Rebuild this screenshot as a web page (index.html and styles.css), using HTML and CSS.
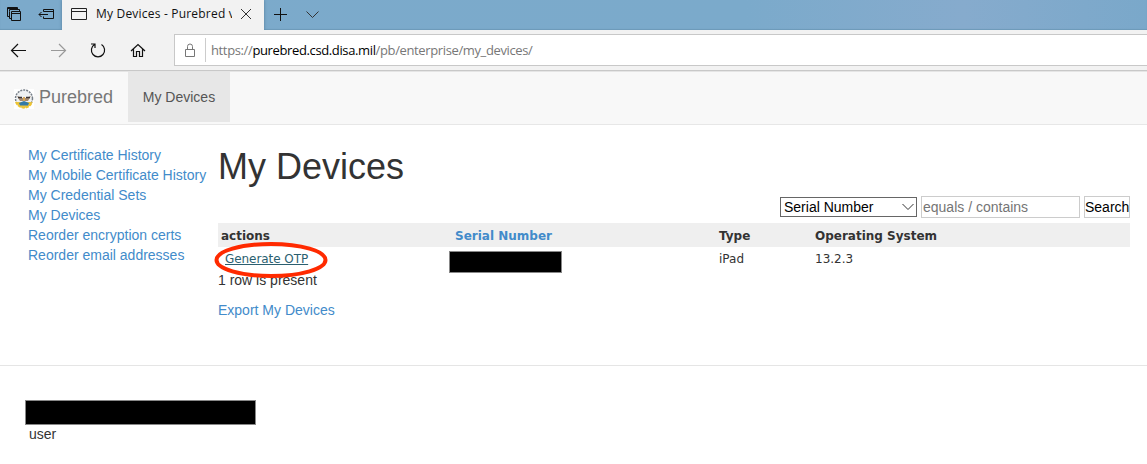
FILE: index.html
```
<!DOCTYPE html>
<html lang="en">
<head>
<meta charset="utf-8">
<title>My Devices - Purebred</title>
<link rel="stylesheet" href="styles.css">
</head>
<body>
<div class="tabstrip">
  <svg class="strip-tools" width="62" height="30" fill="none" stroke="#111">
    <path d="M9.500 16.500h-2v-9h10v2M7.500 8.500h10M11.500 18.500h-2v-7M11.500 11.500h9v9h-9zM11.500 13.500h9M9.500 11.500v-2h10v2"/>
    <path d="M43.500 11.500v-2h10v9h-10v-2M43.500 11.500h10M39 14.500h9M41.500 12l-2.500 2.500 2.500 2.500"/>
  </svg>
  <div class="tab">
    <svg width="16" height="14" fill="none" stroke="#222"><path d="M.5 1.500h15v11H.5zM.5 4.500h15"/></svg>
    <span class="tab-title">My Devices - Purebred v</span>
    <svg class="tab-close" width="12" height="12" stroke="#333"><path d="M1 1l10 10M11 1L1 11"/></svg>
  </div>
  <svg width="70" height="30" fill="none" stroke="#111"><path d="M10 14.500h13M16.500 8v13"/><path d="M42.500 11.500l6 6 6-6" stroke="#333"/></svg>
</div>
<div class="toolbar">
  <svg class="nav-icons" width="174" height="40" fill="none" stroke="#111" stroke-width="1.200">
    <path d="M12 20.500h14M18 14l-6.500 6.500L18 27"/>
    <path d="M51 20.500h14M59 14l6.500 6.500L59 27" stroke="#999"/>
    <path d="M94.500 14.600a6.600 6.600 0 1 0 7 0M91 14h4v4"/>
    <path d="M131 21l7-6.500 7 6.500M133.500 19v7.500h3v-5h3v5h3V19"/>
  </svg>
  <div class="address">
    <svg width="30" height="30" fill="none" stroke="#777"><path d="M10.500 14.500h9v7h-9zM12.500 14.500v-3a2.500 2.500 0 0 1 5 0v3"/></svg>
    <span class="address-text">https://<b>purebred.csd.disa.mil</b>/pb/enterprise/my_devices/</span>
  </div>
</div>
<nav class="navbar">
  <a class="brand"><svg width="20" height="20" viewBox="0 0 20 20">
    <path fill="#fff" d="M0 0h20v20H0z"/>
    <circle cx="10" cy="9.500" r="8.500" fill="#eef1f3" stroke="#777f88" stroke-width="1.500" stroke-dasharray="2 1"/>
    <path d="M2 13a8.500 8.500 0 0 0 16 0" fill="#e9c443" stroke="#efc530" stroke-width="2" stroke-dasharray="3 1"/>
    <path d="M3 7l5 2h4l5-2-3 5H6z" fill="#a48a70"/>
    <path d="M4 8.500h4M12 8.500h4" stroke="#3b3436" stroke-width="1.500"/>
    <path d="M5 14l5-2 5 2-1 2.500H6z" fill="#347aa6"/><path d="M9 8h2v4H9z" fill="#d5a75a"/>
  </svg><span>Purebred</span></a>
  <a class="nav-item"><span>My Devices</span></a>
</nav>
<main class="page">
  <aside class="menu">
    <a>My Certificate History</a><a>My Mobile Certificate History</a><a>My Credential Sets</a><a>My Devices</a><a>Reorder encryption certs</a><a>Reorder email addresses</a>
  </aside>
  <section class="content">
    <h1>My Devices</h1>
    <div class="search">
      <div class="select">Serial Number<svg width="12" height="8" fill="none" stroke="#333"><path d="M.5 1l5.500 5.500L11.500 1"/></svg></div>
      <div class="field">equals / contains</div>
      <div class="button">Search</div>
    </div>
    <div class="row head"><span>actions</span><span class="sort">Serial Number</span><span>Type</span><span>Operating System</span></div>
    <div class="row data"><span class="action"><a>Generate OTP</a><svg class="marker" width="116" height="40"><ellipse cx="58" cy="20" rx="54.500" ry="16" fill="none" stroke="#ff2a00" stroke-width="4"/></svg></span><span class="redacted"></span><span>iPad</span><span>13.2.3</span></div>
    <p class="count">1 row is present</p>
    <a class="export">Export My Devices</a>
  </section>
</main>
<footer class="footer"><div class="redacted-name"></div><div class="role">user</div></footer>
</body>
</html>
```
FILE: styles.css
```
* { box-sizing: border-box; }
body { margin: 0; width: 1147px; height: 464px; overflow: hidden; background: #fff; color: #333; font: 14px/20px "Liberation Sans", Arial, sans-serif; }
svg { display: block; flex: none; }
.tabstrip { display: flex; height: 30px; background: linear-gradient(90deg, #7caacb 0%, #7baacb 65%, #86abcd 84%, #7aa8ca 100%); box-shadow: inset 0 -1px 1px #6d99b9; }
.tab { display: flex; align-items: center; width: 202px; height: 30px; padding: 0 12px 2px 9px; background: #f2f2f2; box-shadow: 0 0 3px #527b99; clip-path: inset(0 -4px 0 -4px); }
.tab-title { width: 136px; margin-left: 9px; overflow: hidden; white-space: nowrap; color: #111; font: 12px/20px "Open Sans", sans-serif; letter-spacing: .2px; }
.tab-close { margin-left: auto; }
.toolbar { display: flex; height: 42px; background: #f2f2f2; border-bottom: 1px solid #e5e5e5; box-shadow: inset 0 -1px #c8c8c8; }
.address { display: flex; align-items: center; flex: 1; height: 32px; margin-top: 4px; background: #fff; border: 1px solid #c8c8c8; border-right: 0; }
.address-text { display: flex; align-items: center; height: 24px; padding-left: 5px; border-left: 1px solid #ccc; color: #777; white-space: nowrap; font: 13px/20px "Open Sans", sans-serif; letter-spacing: -.37px; }
.address-text b { color: #000; font-weight: 400; }
.navbar { display: flex; height: 53px; background: #f8f8f8; border-bottom: 1px solid #e7e7e7; color: #777; }
.brand { display: flex; align-items: center; gap: 5px; width: 128px; height: 50px; padding-left: 14px; font-size: 18px; }
.brand svg { margin-top: 4px; }
.nav-item { display: flex; align-items: center; justify-content: center; width: 102px; height: 50px; background: #e7e7e7; color: #555; }
.page { display: flex; height: 240px; }
.menu { display: flex; flex-direction: column; width: 218px; padding: 20px 0 0 28px; color: #428bca; white-space: nowrap; }
.content { width: 912px; padding-top: 22px; }
h1 { margin: 0; font-size: 36px; line-height: 40px; font-weight: 500; }
.search { display: flex; justify-content: flex-end; gap: 4px; height: 22px; margin: 9px 0 5px; color: #000; }
.select { display: flex; align-items: center; justify-content: space-between; width: 137px; height: 20px; margin-top: 1px; padding: 0 2px 0 3px; border: 1px solid #666; }
.field { width: 159px; padding-left: 1px; border: 1px solid #ccc; color: #757575; }
.button { width: 46px; border: 1px solid #ccc; white-space: nowrap; }
.row { display: grid; grid-template-columns: 228px 270px 96px 1fr; align-items: center; height: 24px; padding-left: 3px; font: 12px/18px "DejaVu Sans", Verdana, sans-serif; }
.head { padding-top: 1px; background: #efefef; font-weight: 700; }
.data { height: 23px; grid-template-rows: 23px; }
.sort { padding-left: 6px; color: #428bca; }
.action { position: relative; padding-left: 4px; color: #2b5f70; }
.action a { text-decoration: underline; letter-spacing: -.06px; }
.marker { position: absolute; left: -8px; top: -10px; }
.redacted { width: 113px; height: 22px; margin-top: 6px; background: #000; border: 1px solid #888; }
.count { margin: 0 0 10px; }
.export { display: block; color: #428bca; }
.footer { height: 99px; padding: 34px 0 0 25px; border-top: 1px solid #e5e5e5; }
.redacted-name { width: 231px; height: 25px; background: #000; border: 1px solid #888; }
.role { margin: -1px 0 0 4px; }
```
